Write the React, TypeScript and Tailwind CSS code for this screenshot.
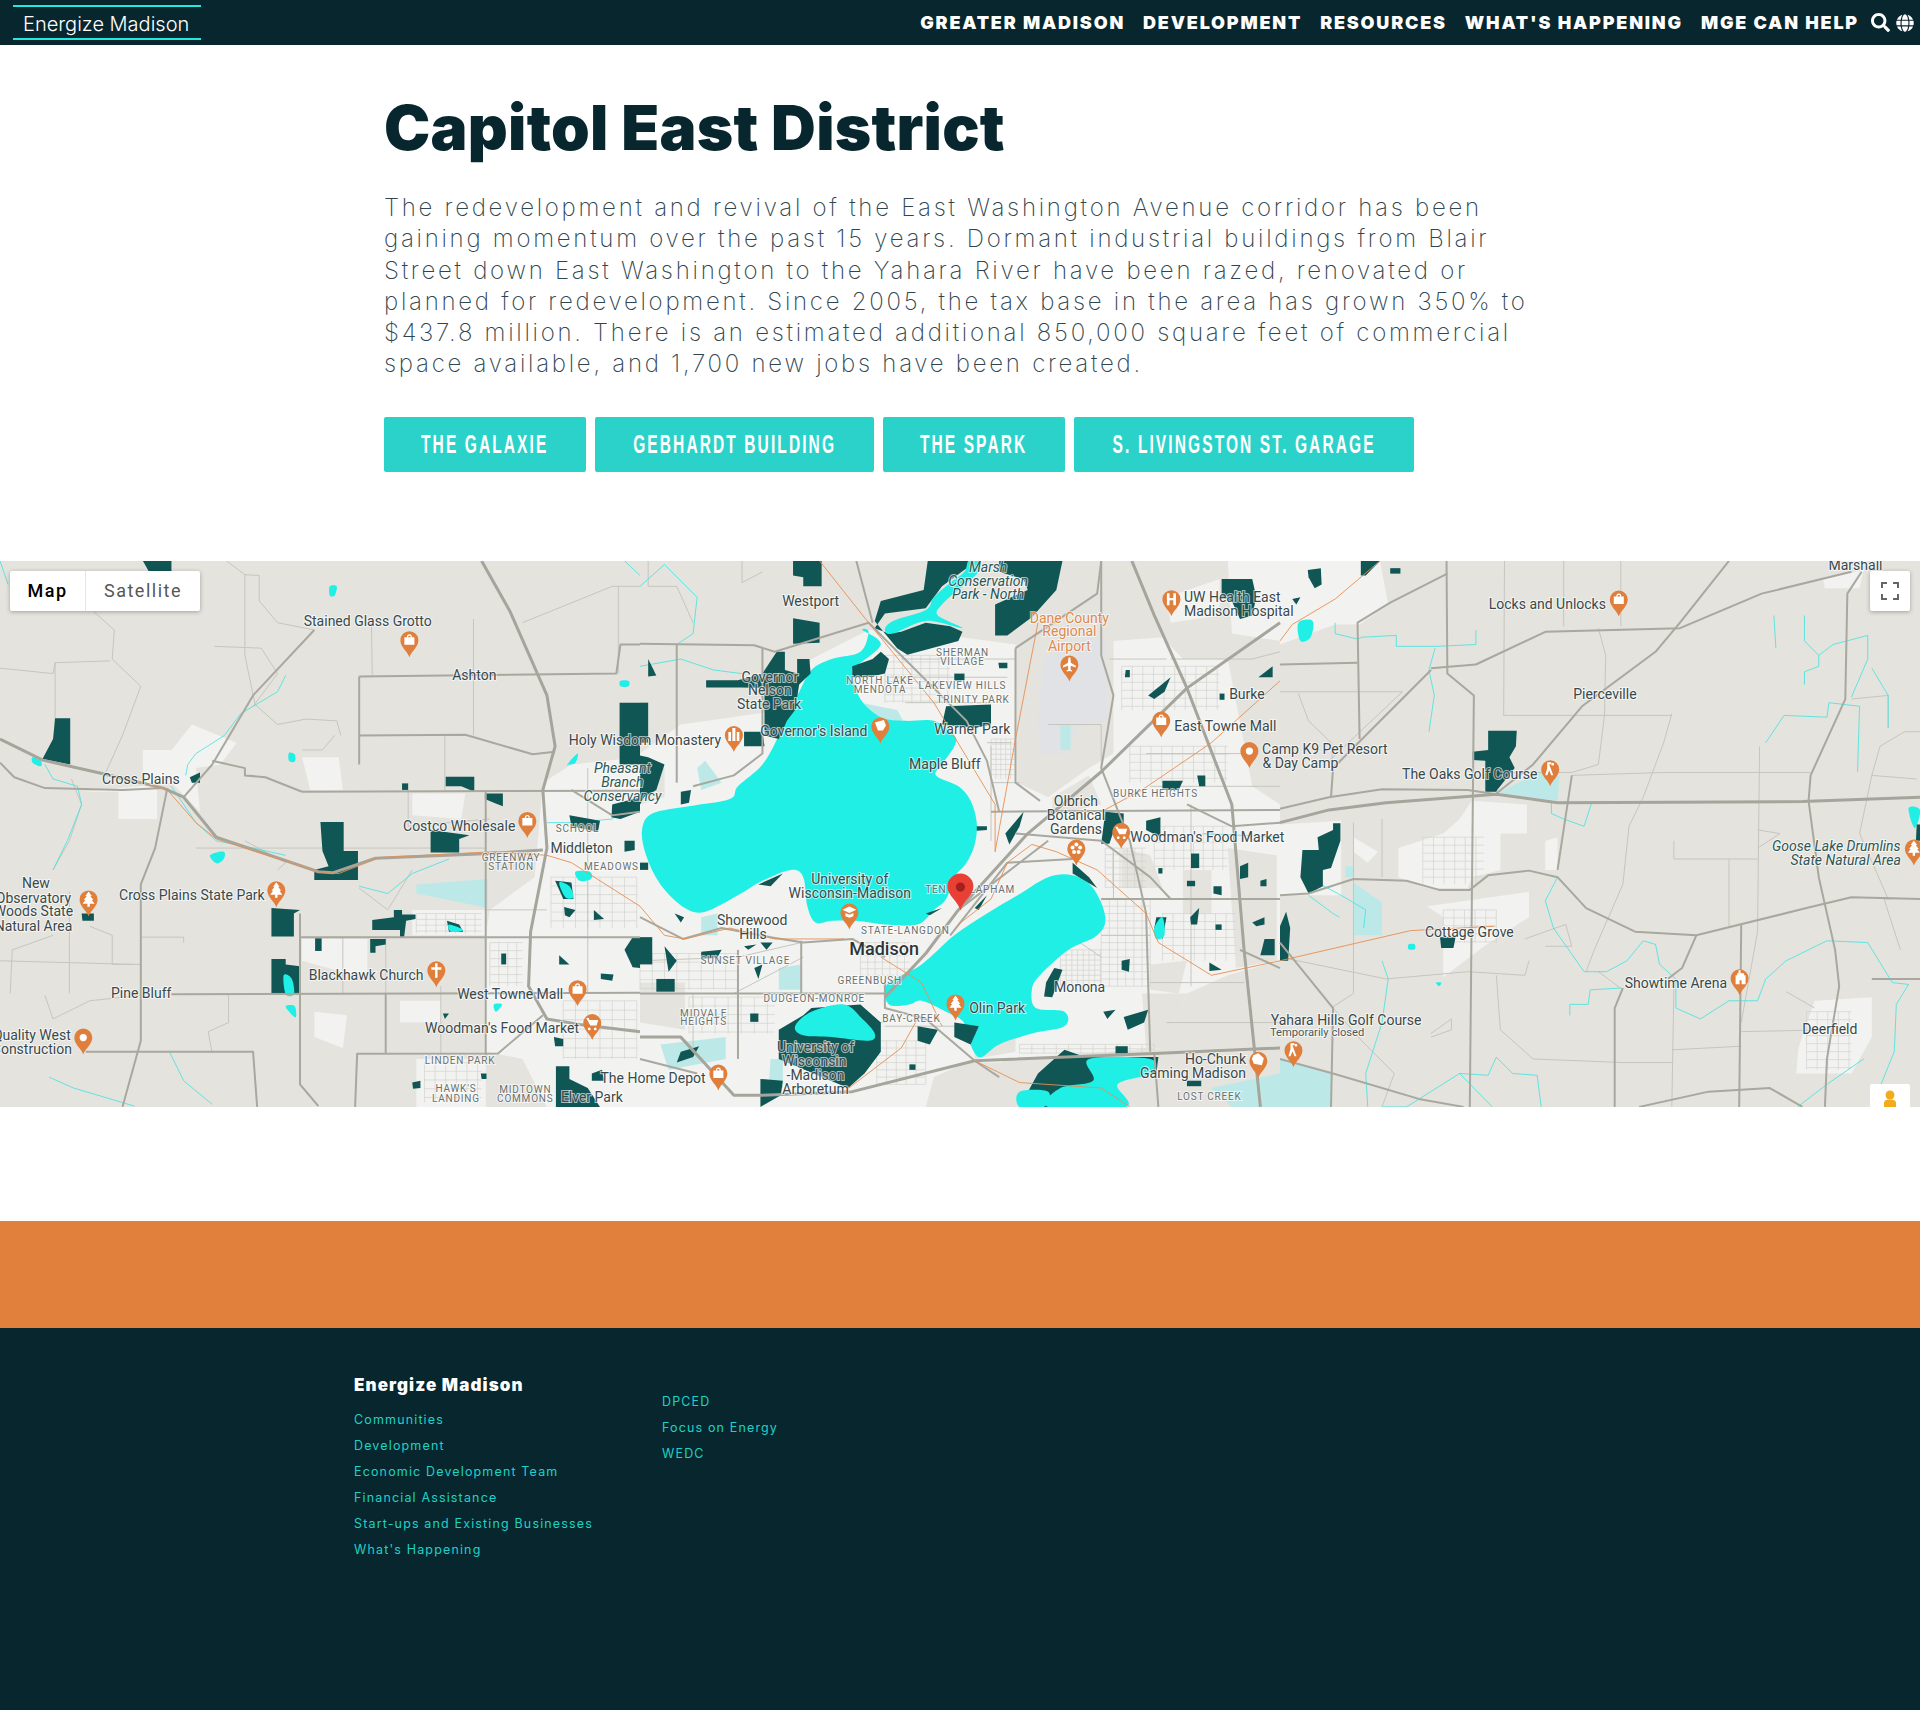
import { FaGlobe, FaSearch } from "react-icons/fa"

type Layer = [number, string[]]

const SX = 640 / 1568
const SY = 570 / 1568
const A = 0
const B = 640
const C = 1280

// thin street grid for the built-up parts of the map
function grid(x0: number, y0: number, x1: number, y1: number, dx: number, dy: number) {
  let d = ""
  for (let x = x0; x <= x1; x += dx) d += `M${x} ${y0}V${y1}`
  for (let y = y0; y <= y1; y += dy) d += `M${x0} ${y}H${x1}`
  return d
}

// closed catmull-rom curve through the points of a polygon, for shorelines
function smooth(poly: string) {
  const n = (poly.match(/-?\d+(\.\d+)?/g) ?? []).map(Number)
  const pts: [number, number][] = []
  for (let i = 0; i < n.length; i += 2) pts.push([n[i], n[i + 1]])
  let d = `M${pts[0][0]} ${pts[0][1]}`
  for (let i = 0; i < pts.length; i++) {
    const p0 = pts[(i - 1 + pts.length) % pts.length]
    const p1 = pts[i]
    const p2 = pts[(i + 1) % pts.length]
    const p3 = pts[(i + 2) % pts.length]
    d += `C${p1[0] + (p2[0] - p0[0]) / 6} ${p1[1] + (p2[1] - p0[1]) / 6} ${p2[0] - (p3[0] - p1[0]) / 6} ${p2[1] - (p3[1] - p1[1]) / 6} ${p2[0]} ${p2[1]}`
  }
  return d + "Z"
}

const urban: Layer[] = [
  [A, [
    "M1330 640 1400 590 1568 570 1568 1532 1340 1532 1280 1400 1190 1380 1190 1060 1200 990 1310 900z",
    "M205 665 290 665 290 740 385 740 385 660 350 640 350 550 420 550 470 480 580 530 540 590 480 600 490 720 420 640z",
    "M740 570 830 570 840 660 760 660z",
    "M1010 670 1140 670 1130 740 1010 730z",
    "M1010 990 1190 990 1190 1060 1010 1060z",
    "M740 1070 900 1070 900 1180 740 1130z",
    "M980 1240 1080 1240 1080 1300 980 1300z",
    "M770 1270 850 1280 840 1370 770 1340z",
    "M1020 1400 1190 1400 1190 1532 1020 1532z",
    "M1190 1070 1290 1070 1290 1300 1190 1300z",
  ]],
  [B, [
    "M0 560 100 480 290 450 360 440 420 300 560 220 720 230 920 260 925 640 1000 680 1100 600 1160 560 1160 250 1280 240 1330 300 1440 300 1500 650 1568 700 1568 1130 1440 1170 1340 1220 1280 1370 900 1400 720 1532 0 1532z",
    "M1290 130 1420 80 1420 180 1300 200z",
    "M1440 30 1568 30 1568 250 1450 230z",
  ]],
  [C, [
    "M0 30 245 30 265 150 195 205 135 205 0 260z",
    "M0 755 150 745 150 950 0 950z",
    "M470 690 605 700 605 780 540 780 540 880 470 900 460 930 360 930 290 900 290 820 400 780 440 740z",
    "M360 980 610 940 610 1010 500 1090 400 1175 400 1010z",
    "M180 790 240 830 215 860 180 830z",
    "M1310 1240 1450 1230 1450 1340 1400 1440 1265 1440 1270 1370z",
    "M650 800 680 790 680 880 650 880z",
    "M1330 80 1430 55 1420 105 1335 105z",
  ]],
]

const land: Layer[] = [
  [B, [
    "M0 1190 110 1190 110 1320 0 1300z",
    "M800 1410 920 1410 900 1532 700 1532 720 1450z",
    "M1230 1220 1340 1220 1280 1370 1240 1370z",
    "M120 270 300 270 300 420 160 420 120 380z",
    "M1180 820 1250 840 1280 930 1180 930z",
    "M1440 820 1560 840 1560 1130 1460 1150z",
    "M1330 880 1400 880 1400 1000 1330 1000z",
    "M1250 1140 1340 1130 1320 1220 1250 1210z",
    "M1010 680 1100 620 1130 700 1010 730z",
    "M0 610 60 600 60 680 0 700z",
    "M820 1300 920 1290 920 1380 820 1400z",
  ]],
]

const wetland: Layer[] = [
  [A, ["M1020 920 1195 905 1195 985 1020 945z"]],
  [B, [
    "M540 420 630 440 650 480 590 470 540 450z",
    "M150 1010 190 1000 190 1060 150 1060z",
    "M340 1150 395 1140 395 1210 340 1210z",
    "M50 1360 210 1340 210 1400 70 1430z",
    "M320 1400 350 1400 350 1480 315 1480z",
    "M1400 1480 1568 1440 1568 1532 1450 1532z",
    "M140 600 160 580 200 640 150 660z",
    "M1030 480 1055 480 1055 550 1030 550z",
  ]],
  [C, [
    "M0 1400 125 1440 125 1532 0 1532z",
    "M540 665 640 610 685 620 680 690 540 670z",
    "M180 915 250 970 250 1060 180 1060z",
    "M160 870 180 870 180 900 160 900z",
  ]],
]

const streets: Layer[] = [
  [A, [
    grid(1350, 900, 1560, 1040, 30, 24),
    grid(1200, 1080, 1280, 1200, 22, 22),
    grid(1020, 1000, 1180, 1055, 24, 16),
    grid(1040, 1410, 1180, 1520, 26, 24),
    grid(1380, 1240, 1560, 1400, 30, 26),
  ]],
  [B, [
    grid(860, 520, 918, 630, 12, 14),
    grid(1140, 820, 1240, 930, 18, 18),
    grid(1130, 960, 1250, 1200, 20, 20),
    grid(1260, 760, 1440, 880, 24, 22),
    grid(1280, 1000, 1460, 1130, 26, 22),
    grid(1030, 1100, 1130, 1200, 14, 14),
    grid(600, 290, 760, 420, 22, 18),
    grid(0, 1110, 240, 1210, 30, 24),
    grid(120, 1230, 330, 1330, 32, 24),
    grid(540, 1080, 660, 1170, 18, 18),
    grid(1180, 320, 1420, 440, 26, 22),
    grid(1200, 540, 1440, 640, 26, 22),
    grid(930, 1360, 1260, 1385, 30, 12),
    grid(580, 1350, 700, 1470, 24, 20),
  ]],
  [C, [
    grid(350, 790, 500, 920, 26, 22),
    grid(400, 990, 530, 1080, 26, 22),
    grid(1290, 1270, 1400, 1430, 26, 22),
  ]],
]

const minor: Layer[] = [
  [A, [
    "M555 30 600 68 635 70 635 140 680 200 770 220",
    "M230 170 280 220 275 300 345 375 300 510 260 610",
    "M0 325 130 340 135 310 270 305",
    "M135 310 135 520",
    "M600 68 600 290 625 425 680 480 750 465 825 470 835 510",
    "M525 265 640 270 680 340 620 430",
    "M1160 190 1160 510",
    "M910 190 912 345",
    "M1280 200 1500 100 1568 100",
    "M1515 100 1515 340",
    "M740 550 790 550 820 510",
    "M1090 510 1090 665",
    "M480 820 1190 820",
    "M345 1065 450 1065 450 1080",
    "M175 630 200 700 170 800 130 880",
    "M170 940 170 1220",
    "M0 1130 330 1140",
    "M25 1220 30 1100 130 1060",
    "M220 1035 275 1060 275 1140 345 1140",
    "M110 1225 130 1290 220 1240 345 1225",
    "M560 1225 560 1300 510 1325 520 1385",
    "M1080 1200 1080 1390",
    "M840 1065 840 1220",
    "M945 1065 945 1220",
    "M680 880 700 860 600 800",
    "M1000 660 1000 760 1200 740",
    "M880 930 950 990 1010 880",
    "M1440 600 1440 1220",
    "M1190 990 1340 990",
  ]],
  [B, [
    "M0 1130 240 1120 395 1080",
    "M130 1220 130 1400",
    "M230 1220 400 1120",
    "M850 530 910 530",
    "M860 640 930 640",
    "M860 540 860 800",
    "M1240 560 1500 560",
    "M1250 650 1568 650",
    "M1130 1060 1250 1060",
    "M1250 1190 1480 1190",
    "M1000 1020 1130 1120",
    "M1300 300 1500 300 1568 280",
    "M1150 300 1290 300",
    "M1350 700 1350 1200",
    "M1160 830 1160 960",
    "M650 420 860 420",
    "M640 300 920 300",
    "M610 350 900 350",
    "M250 30 250 90 300 60",
    "M20 30 20 100 90 100 130 200",
    "M1000 480 1130 480 1130 600",
    "M1290 1300 1568 1300",
    "M600 1310 770 1310",
    "M440 1300 600 1300",
  ]],
  [C, [
    "M550 30 548 455 960 455",
    "M835 30 835 210",
    "M695 30 695 210",
    "M780 215 798 290 795 455 780 590 715 612 540 612",
    "M960 450 940 530 890 680 855 760 840 920 770 1100 750 1160",
    "M1175 540 1170 1050 1130 1300",
    "M0 390 300 390 120 580",
    "M45 395 70 470 125 530 130 600",
    "M965 800 965 850 1170 850",
    "M1100 850 1100 1040",
    "M715 620 940 612 1300 612",
    "M1170 770 1225 780 1170 820",
    "M530 1170 540 1320 620 1400 840 1410 960 1410",
    "M965 1200 960 1532",
    "M960 1375 1130 1365",
    "M1130 1325 1340 1320",
    "M1240 1215 1310 1260",
    "M1400 410 1490 400 1490 490",
    "M1450 620 1420 780 1490 960",
    "M180 750 180 1220 125 1260",
    "M250 740 250 900",
    "M130 1260 200 1350 280 1440 250 1532",
    "M0 1120 260 1180 460 1160 600 1170 610 1130",
    "M600 1070 700 1030 715 1090 650 1090",
    "M780 1160 840 1210",
    "M370 1330 420 1290 420 1320 370 1340",
    "M1500 960 1480 960 1520 1100",
    "M1560 630 1450 620 1470 540 1530 500 1568 500",
  ]],
]

const streams: Layer[] = [
  [A, [
    "M700 345 680 390 590 450 550 510 480 560 460 590 455 620",
    "M110 590 130 630 190 650 200 700 165 800 130 880",
    "M0 30 20 95",
    "M420 650 480 750 530 800 620 820 700 840",
    "M880 925 950 945 1010 890 1100 850",
    "M415 1380 450 1460 520 1525",
    "M120 1450 180 1480 330 1530",
    "M1530 30 1568 70",
    "M1568 680 1500 740 1400 750 1340 750",
  ]],
  [B, [
    "M0 100 60 40 140 130 130 230 90 260",
    "M0 320 100 300 180 330 250 340",
    "M1380 780 1568 790",
  ]],
  [C, [
    "M135 200 135 230 190 245 200 240 285 235 285 265 385 265 480 260 480 220",
    "M380 270 365 330 378 400 365 500",
    "M765 690 745 760 695 740 665 725 665 690",
    "M680 900 650 965 670 1040 745 1160 800 1160 850 1130 890 1075 920 1085 930 1140 970 1180 970 1260 1030 1290 1100 1240 1170 1240 1190 1180 1240 1130 1340 1075 1440 1080 1500 1190 1540 1195 1510 1250 1505 1380 1450 1532",
    "M1285 180 1285 250 1320 290 1320 320 1285 335 1285 370",
    "M1210 180 1215 270",
    "M1320 290 1355 260 1440 235 1440 300 1400 405",
    "M1190 530 1235 455 1340 460 1345 420 1420 430 1415 610",
    "M100 920 150 950 210 990 205 1040",
    "M250 1130 265 1180 250 1300 210 1440 215 1532",
    "M710 1280 710 1250 755 1250 760 1210 835 1205",
    "M250 1532 310 1532 440 1440 510 1445 530 1395 570 1440 630 1445 640 1532",
    "M440 1440 520 1532",
    "M1430 1400 1340 1470 1268 1532",
    "M70 950 130 1000 145 1010",
    "M1450 325 1490 400 1490 490",
  ]],
]

const lakes: Layer[] = [
  [A, [
    "M80 570 100 580 100 595 80 585z",
    "M708 558 722 562 722 582 708 580z",
    "M515 840 548 830 548 850 530 862z",
    "M808 100 825 100 820 125 808 125z",
    "M1410 885 1445 885 1448 905 1420 910z",
    "M1390 590 1415 560 1410 585 1395 590z",
    "M1520 360 1540 360 1540 375 1520 375z",
    "M1210 1250 1230 1250 1215 1270z",
  ]],
  [B, [
    "M5 770 30 725 120 705 220 685 240 650 300 590 340 510 360 450 390 390 420 330 470 300 540 280 560 225 545 220 590 260 530 320 520 340 540 410 590 460 650 470 720 470 770 510 770 540 740 590 725 620 780 650 810 690 825 750 820 810 800 860 770 900 750 960 720 990 680 1030 600 1030 530 1020 470 1020 430 1025 410 980 400 900 370 880 300 910 240 950 160 995 110 985 50 920 15 840z",
    "M925 950 1000 900 1060 895 1110 930 1140 1010 1120 1060 1050 1100 980 1170 960 1210 970 1260 1040 1270 1040 1310 960 1330 880 1360 830 1395 800 1330 790 1295 750 1270 690 1240 660 1250 610 1250 605 1195 690 1140 770 1060 850 1000z",
  ]],
  [C, [
    "M45 200 80 195 75 240 50 250z",
    "M1540 710 1568 715 1555 765z",
    "M315 1085 330 1085 330 1098 315 1098z",
    "M382 1190 395 1190 390 1200z",
  ]],
]

const parks: Layer[] = [
  [A, [
    "M1518 420 1568 420 1568 590 1518 590z",
    "M135 463 172 463 172 590 104 575 130 520z",
    "M1092 624 1162 624 1162 665 1130 650 1092 650z",
    "M1188 670 1232 670 1232 705 1210 695 1188 685z",
    "M985 642 1000 642 1000 660 985 660z",
    "M465 625 490 612 490 640 470 640z",
    "M785 748 842 748 842 828 877 828 877 908 770 908 770 880 805 870 790 828z",
    "M1055 770 1150 785 1125 795 1125 832 1055 832z",
    "M912 1018 965 1010 965 990 985 990 985 1003 1018 1003 1018 1015 995 1020 990 1065 980 1065 980 1045 912 1045z",
    "M665 985 735 990 720 1000 720 1063 665 1063z",
    "M772 1068 788 1068 788 1103 772 1103z",
    "M907 1070 945 1070 945 1085 920 1090 920 1108 907 1108z",
    "M665 1125 700 1125 700 1140 735 1145 735 1222 665 1222z",
    "M1095 1020 1125 1030 1135 1050 1100 1050z",
    "M1382 982 1410 990 1395 1010 1384 1005z",
    "M1455 990 1480 1015 1455 1018z",
    "M1360 910 1400 915 1405 960 1380 960z",
    "M1370 1115 1395 1140 1370 1140z",
    "M1472 1165 1503 1168 1500 1185 1472 1180z",
    "M1530 1100 1550 1065 1568 1065 1568 1150 1550 1148z",
    "M1228 1110 1240 1110 1240 1140 1228 1140z",
    "M1362 1420 1395 1420 1395 1455 1440 1480 1470 1532 1362 1532z",
    "M1450 1440 1475 1430 1480 1460 1450 1460z",
    "M1357 1340 1380 1345 1380 1365 1360 1365z",
    "M1010 1465 1030 1460 1030 1480 1012 1482z",
    "M1178 1440 1192 1440 1192 1455 1180 1455z",
    "M1500 700 1568 680 1568 720 1520 740 1498 735z",
    "M1395 730 1470 745 1465 775 1400 760z",
    "M350 30 420 30 420 60 365 60z",
    "M200 1000 230 1000 230 1020 202 1020z",
    "M1530 800 1555 800 1555 825 1530 830z",
    "M1085 1275 1100 1275 1090 1290z",
  ]],
  [B, [
    "M375 30 445 30 445 100 400 100 400 75 375 70z",
    "M375 188 440 200 440 255 375 258z",
    "M705 30 805 30 800 50 740 100 700 160 600 175 575 215 610 230 640 225 700 200 760 210 790 225 780 250 655 288 630 270 600 230 575 195 590 140 695 110z",
    "M880 30 1035 30 1020 110 960 185 900 235 870 235 870 150 950 110 940 80 880 60z",
    "M335 280 355 280 355 330 385 340 385 300 415 300 418 340 390 370 380 440 360 470 340 520 305 510 305 380 250 378 162 378 162 358 240 358 300 340z",
    "M0 420 20 420 20 530 0 530z",
    "M255 500 300 500 305 540 255 540z",
    "M0 565 20 570 60 590 40 660 10 680 0 700z",
    "M520 320 570 300 590 280 610 300 600 340 560 350 520 350z",
    "M750 430 860 425 860 480 820 490 740 480z",
    "M770 340 795 340 795 360 770 360z",
    "M878 310 900 310 900 325 880 325z",
    "M100 665 125 660 120 695 100 700z",
    "M20 300 40 345 20 348z",
    "M1425 80 1500 80 1510 130 1500 180 1470 190 1450 140 1425 130z",
    "M1245 400 1300 350 1285 390 1260 410z",
    "M1190 330 1200 330 1200 350 1188 350z",
    "M1420 395 1432 395 1432 412 1420 412z",
    "M1515 350 1550 320 1550 350z",
    "M1280 635 1330 635 1320 660 1280 660z",
    "M1365 620 1385 620 1385 650 1370 650z",
    "M895 780 940 720 930 760 905 810z",
    "M825 760 850 760 850 770 825 772z",
    "M1140 720 1185 725 1185 760 1160 775 1150 808 1130 808z",
    "M1240 745 1275 735 1275 790 1240 770z",
    "M1350 835 1370 835 1370 875 1350 875z",
    "M1470 870 1490 860 1490 900 1470 905z",
    "M1270 875 1280 875 1280 890 1270 890z",
    "M1340 910 1360 910 1360 925 1340 925z",
    "M1405 925 1425 925 1425 950 1405 945z",
    "M1520 910 1535 905 1535 925 1520 925z",
    "M1348 1010 1370 985 1365 1030 1350 1030z",
    "M1265 1010 1290 1010 1280 1070 1260 1040z",
    "M1500 1025 1530 1010 1530 1030 1510 1035z",
    "M1410 1030 1425 1030 1425 1045 1410 1045z",
    "M1530 1070 1555 1070 1555 1115 1520 1115z",
    "M1395 1135 1425 1155 1395 1158z",
    "M1180 1130 1200 1125 1198 1160 1180 1155z",
    "M995 1190 1015 1150 1035 1155 1010 1230 990 1228z",
    "M1135 1270 1165 1265 1145 1290z",
    "M1185 1285 1245 1265 1235 1300 1195 1320z",
    "M930 1532 975 1440 1040 1375 1090 1395 1270 1395 1265 1440 1170 1430 1120 1470 1110 1532z",
    "M1340 1460 1375 1460 1375 1475 1340 1475z",
    "M1165 1365 1195 1365 1195 1385 1165 1385z",
    "M340 1320 400 1280 420 1260 540 1250 590 1300 590 1380 550 1440 510 1480 340 1400z",
    "M295 1455 350 1460 345 1500 295 1532z",
    "M40 1180 85 1180 85 1215 40 1215z",
    "M270 1275 290 1275 290 1298 270 1298z",
    "M770 1300 830 1310 810 1360 770 1340z",
    "M680 1310 730 1320 710 1360 680 1350z",
    "M0 1065 30 1065 30 1140 0 1140z",
    "M60 1090 90 1130 70 1160z",
    "M150 1105 200 1100 190 1120 150 1125z",
    "M85 1000 108 1010 100 1025z",
    "M280 1150 300 1140 290 1180z",
    "M295 1080 325 1080 310 1100z",
    "M255 1090 285 1085 265 1100z",
    "M290 920 350 890 320 925z",
    "M100 1380 145 1365 130 1395 90 1410z",
    "M700 1000 740 985 710 1005z",
    "M820 985 850 950 830 990z",
    "M660 1415 675 1415 675 1430 660 1430z",
    "M1060 860 1100 900 1120 930 1060 890z",
    "M0 860 20 860 20 880 0 880z",
  ]],
  [C, [
    "M472 555 510 550 510 497 580 497 578 540 562 570 575 600 532 660 530 665 503 665 503 580 472 578z",
    "M55 825 95 825 92 790 130 770 130 752 148 752 148 800 125 875 105 880 105 925 70 945 50 900z",
    "M0 1035 15 995 25 1040 20 1130 0 1130z",
    "M392 1065 430 1065 425 1095 395 1095z",
    "M68 55 100 50 102 95 85 105 70 75z",
    "M198 30 245 30 210 70 198 70z",
    "M270 50 295 50 295 65 270 65z",
    "M30 135 50 130 40 150z",
    "M1560 755 1568 755 1568 800 1558 800z",
  ]],
]

const waterOverParks: Layer[] = [
  [A, [
    "M1370 915 1395 925 1405 955 1385 955z",
    "M695 1170 715 1180 720 1222 700 1222z",
    "M700 1255 722 1255 725 1285 712 1275z",
    "M1100 1030 1135 1045 1105 1050z",
  ]],
  [B, [
    "M805 30 795 60 760 90 720 130 700 165 620 195 600 220 620 230 700 195 790 215 730 180 740 150 790 100 830 60 830 30z",
    "M1100 1400 1250 1400 1250 1440 1170 1470 1190 1532 1000 1532 1030 1480 1110 1460z",
    "M930 1490 1000 1490 990 1532 930 1532z",
    "M380 1310 420 1270 500 1250 545 1290 575 1330 560 1350 470 1340 400 1335z",
    "M1260 1040 1280 1010 1285 1060 1265 1070z",
  ]],
]

const roads: Layer[] = [
  [A, [
    "M0 585 35 625 110 655 300 660 400 655",
    "M770 220 620 400 520 590 450 680",
    "M880 348 1510 340 1520 260 1568 260",
    "M880 510 1140 508 1305 562 1360 555",
    "M740 665 1568 662",
    "M735 1065 1568 1065",
    "M420 1222 1568 1218",
    "M410 655 380 820 345 920 345 1350 300 1532",
    "M210 1380 620 1380 630 1532",
    "M735 1000 735 1470 780 1530",
    "M1190 660 1190 1390",
    "M870 1532 875 1386 1220 1385 1330 1280",
    "M520 580 600 600 600 620 650 625 740 665",
    "M880 348 880 590",
    "M945 1220 945 1385",
    "M1400 660 1500 730 1568 720",
  ]],
  [B, [
    "M0 258 280 262 330 280 560 200 640 290 800 470 850 580 880 720",
    "M530 30 570 200",
    "M1130 30 1130 290 1160 400 1130 600 1200 800 1240 1000 1250 1380",
    "M860 720 1568 715",
    "M1130 960 1568 960",
    "M0 1010 105 1070 200 1040 320 1065 400 1080 520 1070 600 1120",
    "M600 1180 600 1260 700 1290 820 1405 880 1450",
    "M920 270 1120 120 1130 30",
    "M920 270 920 640 980 690",
    "M90 260 90 640",
    "M300 270 300 560 230 620 130 650",
    "M0 1220 600 1220",
    "M920 780 1130 800 1250 900 1300 960",
    "M1340 700 1450 760 1568 750",
    "M240 1100 240 1400",
    "M395 1075 395 1220",
    "M1260 1385 1270 1532",
    "M0 1400 140 1440",
    "M1568 1150 1470 1100",
    "M780 990 1000 800",
    "M760 1060 900 860 1060 850",
  ]],
  [C, [
    "M0 712 120 680 250 658 460 660 530 672",
    "M0 950 70 945 180 905 310 910 390 935 465 935 510 895 610 882 680 900 750 985 870 1050 1020 1060 1290 985 1400 955 1568 960",
    "M0 315 190 310",
    "M195 520 190 200 270 145 410 65",
    "M480 315 650 225 980 215 1180 120 1400 60",
    "M370 325 480 315",
    "M125 680 130 600 370 330",
    "M408 30 410 340 475 400 465 1532",
    "M1100 30 980 200 920 280 740 430 620 590 530 670",
    "M1425 60 1390 120 1385 410 1300 620 1295 690 1320 900 1360 1100 1370 1200 1340 1400 1335 1532",
    "M715 620 680 880",
    "M0 1080 130 1260 125 1532",
    "M0 1400 130 1440 340 1510 450 1532",
    "M1020 1060 985 1150 950 1180",
    "M840 1205 820 1260 820 1532",
    "M1130 1030 1125 1532",
    "M880 1532 1050 1490 1200 1480 1280 1532",
    "M1568 1180 1450 1180",
  ]],
]

const highways: Layer[] = [
  [A, [
    "M0 520 105 578 250 615 400 655 450 680 530 790 780 885 815 888 920 848 1200 835 1330 825",
    "M1180 30 1250 170 1340 400 1360 540 1330 660 1340 820 1300 1050 1295 1200 1340 1290 1420 1305 1568 1325",
  ]],
  [B, [
    "M1205 30 1260 180 1340 380 1450 700 1480 1100 1520 1532",
    "M1568 200 1340 380 1130 610 950 780 780 990 700 1110 600 1230",
    "M0 1340 100 1340 230 1500 300 1500 520 1490 820 1405 1260 1385 1568 1370",
  ]],
  [C, ["M0 750 120 715 260 695 530 672 680 695 1280 692 1568 680"]],
]

const rail: Layer[] = [
  [A, ["M355 640 410 660 480 750 530 795 780 885 830 890 930 846 1210 830 1340 840 1400 860 1568 980"]],
  [B, [
    "M0 980 60 1060 110 1070 220 1040 330 1070 500 1070",
    "M440 30 560 200 720 420 870 700 870 830",
    "M975 200 920 520 870 830",
    "M1568 360 1400 530 1230 660 1130 720",
    "M780 1030 860 960 900 860 960 810 1020 830 1120 880 1240 1000 1270 1080 1400 1170 1568 1130",
    "M590 1120 690 1190 740 1310",
    "M500 1490 640 1370 680 1290",
    "M820 1405 930 1465 1130 1480 1200 1532",
  ]],
  [C, ["M0 250 30 205 135 135 245 30", "M0 1130 320 1047 525 1035"]],
]

type Kind = "place" | "park" | "hood" | "air" | "city" | "note"

// x, y are in the same panel units as the shapes
const labels: [number, number, number, string, Kind?][] = [
  [A, 901, 196, "Stained Glass Grotto"],
  [A, 1162, 345, "Ashton"],
  [A, 345, 631, "Cross Plains"],
  [A, 1125, 760, "Costco Wholesale"],
  [A, 1415, 765, "SCHOOL", "hood"],
  [A, 1425, 821, "Middleton"],
  [A, 1252, 845, "GREENWAY", "hood"],
  [A, 1252, 870, "STATION", "hood"],
  [A, 1498, 872, "MEADOWS", "hood"],
  [A, 88, 917, "New"],
  [A, 82, 956, "Observatory"],
  [A, 82, 994, "Woods State"],
  [A, 82, 1033, "Natural Area"],
  [A, 470, 950, "Cross Plains State Park"],
  [A, 897, 1170, "Blackhawk Church"],
  [A, 346, 1218, "Pine Bluff"],
  [A, 1250, 1221, "West Towne Mall"],
  [A, 1230, 1315, "Woodman's Food Market"],
  [A, 78, 1335, "Quality West"],
  [A, 78, 1373, "Construction"],
  [A, 1127, 1403, "LINDEN PARK", "hood"],
  [A, 1117, 1482, "HAWK'S", "hood"],
  [A, 1117, 1508, "LANDING", "hood"],
  [A, 1287, 1485, "MIDTOWN", "hood"],
  [A, 1287, 1510, "COMMONS", "hood"],
  [A, 1450, 1505, "Elver Park"],
  [A, 1580, 523, "Holy Wisdom Monastery"],
  [A, 1525, 600, "Pheasant", "park"],
  [A, 1525, 638, "Branch", "park"],
  [A, 1525, 678, "Conservancy", "park"],
  [A, 1600, 1453, "The Home Depot"],
  [B, 853, 46, "Marsh", "park"],
  [B, 853, 84, "Conservation", "park"],
  [B, 853, 122, "Park - North", "park"],
  [B, 418, 141, "Westport"],
  [B, 1052, 186, "Dane County", "air"],
  [B, 1052, 224, "Regional", "air"],
  [B, 1052, 263, "Airport", "air"],
  [B, 1451, 128, "UW Health East"],
  [B, 1467, 168, "Madison Hospital"],
  [B, 790, 281, "SHERMAN", "hood"],
  [B, 790, 306, "VILLAGE", "hood"],
  [B, 318, 348, "Governor"],
  [B, 318, 386, "Nelson"],
  [B, 316, 424, "State Park"],
  [B, 588, 360, "NORTH LAKE", "hood"],
  [B, 588, 385, "MENDOTA", "hood"],
  [B, 790, 374, "LAKEVIEW HILLS", "hood"],
  [B, 816, 410, "TRINITY PARK", "hood"],
  [B, 1487, 397, "Burke"],
  [B, 426, 498, "Governor's Island"],
  [B, 814, 493, "Warner Park"],
  [B, 1434, 483, "East Towne Mall"],
  [B, 747, 589, "Maple Bluff"],
  [B, 1263, 671, "BURKE HEIGHTS", "hood"],
  [B, 1068, 691, "Olbrich"],
  [B, 1068, 730, "Botanical"],
  [B, 1068, 768, "Gardens"],
  [B, 1390, 790, "Woodman's Food Market"],
  [B, 514, 905, "University of"],
  [B, 514, 944, "Wisconsin-Madison"],
  [B, 725, 933, "TEN", "hood"],
  [B, 863, 933, "LAPHAM", "hood"],
  [B, 275, 1018, "Shorewood"],
  [B, 277, 1057, "Hills"],
  [B, 650, 1046, "STATE-LANGDON", "hood"],
  [B, 598, 1096, "Madison", "city"],
  [B, 258, 1128, "SUNSET VILLAGE", "hood"],
  [B, 563, 1183, "GREENBUSH", "hood"],
  [B, 1077, 1203, "Monona"],
  [B, 427, 1235, "DUDGEON-MONROE", "hood"],
  [B, 875, 1261, "Olin Park"],
  [B, 156, 1274, "MIDVALE", "hood"],
  [B, 156, 1298, "HEIGHTS", "hood"],
  [B, 665, 1290, "BAY-CREEK", "hood"],
  [B, 430, 1367, "University of"],
  [B, 427, 1406, "Wisconsin"],
  [B, 430, 1444, "-Madison"],
  [B, 430, 1483, "Arboretum"],
  [B, 1410, 1401, "Ho-Chunk"],
  [B, 1355, 1440, "Gaming Madison"],
  [B, 1395, 1502, "LOST CREEK", "hood"],
  [B, 1678, 548, "Camp K9 Pet Resort"],
  [B, 1618, 587, "& Day Camp"],
  [B, 1730, 1293, "Yahara Hills Golf Course"],
  [B, 1659, 1326, "Temporarily closed", "note"],
  [C, 1410, 40, "Marshall"],
  [C, 655, 149, "Locks and Unlocks"],
  [C, 796, 397, "Pierceville"],
  [C, 465, 617, "The Oaks Golf Course"],
  [C, 1363, 815, "Goose Lake Drumlins", "park"],
  [C, 1386, 853, "State Natural Area", "park"],
  [C, 464, 1052, "Cottage Grove"],
  [C, 970, 1192, "Showtime Arena"],
  [C, 1347, 1318, "Deerfield"],
]

type Glyph = "bag" | "tree" | "cross" | "cart" | "dot" | "temple" | "boat" | "plane" | "h" | "flower" | "grad" | "casino" | "golf" | "arena"

const pins: [number, number, number, Glyph][] = [
  [A, 1003, 295, "bag"],
  [A, 1292, 792, "bag"],
  [A, 217, 1008, "tree"],
  [A, 677, 983, "tree"],
  [A, 1069, 1203, "cross"],
  [A, 1415, 1255, "bag"],
  [A, 1451, 1348, "cart"],
  [A, 204, 1388, "dot"],
  [B, 230, 556, "temple"],
  [B, 589, 532, "boat"],
  [B, 1052, 362, "plane"],
  [B, 1302, 182, "h"],
  [B, 1277, 516, "bag"],
  [B, 1493, 600, "dot"],
  [B, 1179, 822, "cart"],
  [B, 1069, 868, "flower"],
  [B, 513, 1044, "grad"],
  [B, 192, 1487, "bag"],
  [B, 773, 1294, "tree"],
  [B, 1515, 1452, "casino"],
  [C, 830, 183, "bag"],
  [C, 662, 650, "golf"],
  [C, 1553, 868, "tree"],
  [C, 1126, 1225, "arena"],
  [C, 33, 1423, "golf"],
]

function PinGlyph({ glyph }: { glyph: Glyph }) {
  switch (glyph) {
    case "bag":
      return <path d="M-5 -20h10v7.500h-10z M-2.500 -20a2.500 3 0 0 1 5 0h-1.200a1.300 1.800 0 0 0 -2.600 0z" fill="#fff" />
    case "tree":
      return <path d="M0 -25l3.200 4.500h-1.400l3 4h-1.600l2.800 3.800h-4.800v3h-2.400v-3h-4.800l2.800-3.800h-1.600l3-4h-1.400z" fill="#fff" />
    case "cross":
      return <path d="M-1.200 -24h2.400v4h3.800v2.400h-3.800v8h-2.400v-8h-3.800v-2.400h3.800z" fill="#fff" />
    case "cart":
      return <path d="M-6 -22h2.500l.8 2h8.700l-1.700 5.500h-6.200zM-3 -12.500a1.400 1.400 0 1 0 .01 0zM3 -12.500a1.400 1.400 0 1 0 .01 0z" fill="#fff" />
    case "dot":
      return <circle cx="0" cy="-17" r="3.600" fill="#fff" />
    case "temple":
      return <path d="M-1.500 -24h3v13h-3zM-5.500 -20h2.600v9h-2.600zM2.900 -20h2.600v9h-2.600z" fill="#fff" />
    case "boat":
      return <path d="M-5.500 -21l9 -2.500 2 5.500 -3 5h-5z" fill="#fff" />
    case "plane":
      return <path d="M-1 -24h2l.4 5.200 5 3v1.600l-5-1.600-.3 3.600 1.600 1.200v1l-2.700-.7-2.700.7v-1l1.600-1.200-.3-3.600-5 1.600v-1.600l5-3z" fill="#fff" />
    case "h":
      return <path d="M-4.500 -23h2.600v4.800h3.800v-4.800h2.600v12h-2.600v-4.800h-3.800v4.800h-2.600z" fill="#fff" />
    case "flower":
      return (
        <g fill="#fff">
          <circle cx="0" cy="-21" r="2" />
          <circle cx="-3.800" cy="-18" r="2" />
          <circle cx="3.800" cy="-18" r="2" />
          <circle cx="-2.300" cy="-13.500" r="2" />
          <circle cx="2.300" cy="-13.500" r="2" />
        </g>
      )
    case "grad":
      return <path d="M0 -23l7 3.200-7 3.200-7-3.200zM-4 -16.500l4 1.800 4-1.800v3.200l-4 1.500-4-1.500z" fill="#fff" />
    case "casino":
      return <path d="M-5 -22.500l5 -2 5.500 5 -2 7-8 -1.500 -2 -5z" fill="#fff" />
    case "golf":
      return <path d="M-3 -24h4v2h-2l4 11h-2l-2-5-2 5h-2l2-7z M2.500 -23.500a1.400 1.400 0 1 0 .01 0z" fill="#fff" />
    case "arena":
      return <path d="M-1 -25h2v3h3.500v2h1.500v9h-4v-4h-2v4h-4v-9h1.500v-2h1.500z" fill="#fff" />
  }
}

function Shapes({ layers, fill, stroke, width, round }: { layers: Layer[]; fill?: string; stroke?: string; width?: number; round?: boolean }) {
  return (
    <>
      {layers.map(([off, paths]) => (
        <g key={off} transform={`translate(${off} 550) scale(${SX} ${SY})`}>
          {paths.map((d, i) => (
            <path
              key={i}
              d={round ? smooth(d) : d}
              fill={fill ?? "none"}
              stroke={stroke}
              strokeWidth={width}
              strokeLinejoin="round"
              vectorEffect="non-scaling-stroke"
            />
          ))}
        </g>
      ))}
    </>
  )
}

const labelStyle: Record<Kind, { size: number; fill: string; italic?: boolean; spacing?: number; weight?: number }> = {
  place: { size: 14, fill: "#39494b" },
  park: { size: 14, fill: "#2d5655", italic: true },
  hood: { size: 10, fill: "#69716f", spacing: 0.8 },
  air: { size: 14, fill: "#dd8a4e" },
  city: { size: 18, fill: "#2c3638", weight: 500 },
  note: { size: 11.2, fill: "#4c5a5b" },
}

function MapCanvas() {
  return (
    <svg viewBox="0 561 1920 546" className="block h-[546px] w-[1920px]" aria-label="Map of Madison">
      <rect x="0" y="561" width="1920" height="546" fill="#e4e3de" />
      <Shapes layers={urban} fill="#f2f2f1" />
      <Shapes layers={land} fill="#e4e3de" />
      <Shapes layers={[[B, ["M990 300 1100 240 1140 240 1145 470 1080 480 1040 560 980 560 975 470z"]]]} fill="#e1e2e6" />
      <Shapes layers={wetland} fill="#bce9e7" />
      <Shapes layers={streets} stroke="#d3d3cd" width={0.7} />
      <Shapes layers={minor} stroke="#c6c6bf" width={1} />
      <Shapes layers={streams} stroke="#3fe3df" width={0.8} />
      <Shapes layers={lakes} fill="#20efe6" round />
      <Shapes layers={parks} fill="#0f5654" />
      <Shapes layers={waterOverParks} fill="#20efe6" round />
      <Shapes layers={roads} stroke="#a8a89f" width={2} />
      <Shapes layers={highways} stroke="#a5a59c" width={3} />
      <Shapes layers={rail} stroke="#e88f52" width={0.9} />
      {labels.map(([off, x, y, text, kind], i) => {
        const s = labelStyle[kind ?? "place"]
        return (
          <text
            key={i}
            x={off + x * SX}
            y={550 + y * SY}
            textAnchor="middle"
            dominantBaseline="central"
            fontFamily="Roboto, sans-serif"
            fontSize={s.size}
            fontStyle={s.italic ? "italic" : "normal"}
            fontWeight={s.weight ?? 400}
            letterSpacing={s.spacing ?? 0}
            fill={s.fill}
            stroke="#ffffff"
            strokeOpacity={0.65}
            strokeWidth={2}
            paintOrder="stroke"
          >
            {text}
          </text>
        )
      })}
      {pins.map(([off, x, y, glyph], i) => (
        <g key={i} transform={`translate(${off + x * SX} ${550 + y * SY})`}>
          <path d="M0 0C-2 -6 -9 -10 -9 -17A9 9 0 1 1 9 -17C9 -10 2 -6 0 0Z" fill="#e07f3c" />
          <PinGlyph glyph={glyph} />
        </g>
      ))}
      <g transform={`translate(${B + 785 * SX} ${550 + 992 * SY})`}>
        <path d="M0 0C-2 -9 -13 -15 -13 -24A13 13 0 1 1 13 -24C13 -15 2 -9 0 0Z" fill="#ea3f35" />
        <circle cx="0" cy="-23.500" r="4.600" fill="#a3211c" />
      </g>
    </svg>
  )
}

const navItems = ["GREATER MADISON", "DEVELOPMENT", "RESOURCES", "WHAT'S HAPPENING", "MGE CAN HELP"]
const buttons = [
  { label: "THE GALAXIE", width: "w-[202px]" },
  { label: "GEBHARDT BUILDING", width: "w-[279px]" },
  { label: "THE SPARK", width: "w-[182px]" },
  { label: "S. LIVINGSTON ST. GARAGE", width: "w-[340px]" },
]
const footerLinks = [
  "Communities",
  "Development",
  "Economic Development Team",
  "Financial Assistance",
  "Start-ups and Existing Businesses",
  "What's Happening",
]
const partnerLinks = ["DPCED", "Focus on Energy", "WEDC"]

export default function App() {
  return (
    <div className="flex h-[1710px] w-[1920px] flex-col bg-white font-['Inter',sans-serif]">
      <header className="flex h-[45px] items-center justify-between bg-[#07262e] pl-[13px] pr-[6px]">
        <div className="flex h-[35px] w-[188px] items-center border-y-2 border-[#22e8df] pt-[3px] pl-[10px] text-[20px] font-light text-white">
          Energize Madison
        </div>
        <nav className="flex items-center">
          <div className="flex gap-[18px]">
            {navItems.map((item) => (
              <span key={item} className="text-[18px] font-black tracking-[1.8px] text-white">
                {item}
              </span>
            ))}
          </div>
          <FaSearch className="ml-[12px] text-[19px] text-white" />
          <FaGlobe className="ml-[6px] text-[18px] text-white" />
        </nav>
      </header>

      <main className="pl-[384px]">
        <h1 className="mt-[45px] text-[62px] leading-[76px] font-black tracking-[0.25px] text-[#07262e]">Capitol East District</h1>
        <p className="mt-[26px] text-[24px] leading-[31.3px] font-extralight tracking-[2.73px] text-[#2f4650]">
          The redevelopment and revival of the East Washington Avenue corridor has been
          <br />
          gaining momentum over the past 15 years. Dormant industrial buildings from Blair
          <br />
          Street down East Washington to the Yahara River have been razed, renovated or
          <br />
          planned for redevelopment. Since 2005, the tax base in the area has grown 350% to
          <br />
          $437.8 million. There is an estimated additional 850,000 square feet of commercial
          <br />
          space available, and 1,700 new jobs have been created.
        </p>
        <div className="mt-[37px] flex gap-[9px]">
          {buttons.map(({ label, width }) => (
            <button
              key={label}
              className={`flex h-[55px] items-center justify-center rounded-[2px] bg-[#2bd2ca] ${width}`}
            >
              <span className="scale-x-[0.62] font-['Liberation_Sans',sans-serif] text-[25px] font-bold tracking-[3.4px] whitespace-nowrap text-white">
                {label}
              </span>
            </button>
          ))}
        </div>
      </main>

      <section className="relative mt-[89px] h-[546px] overflow-hidden">
        <MapCanvas />
        <div className="absolute top-[10px] left-[10px] flex h-[40px] rounded-[2px] bg-white font-['Roboto',sans-serif] text-[18px] tracking-[1.5px] shadow-[0_1px_4px_rgba(0,0,0,0.3)]">
          <div className="flex w-[75px] items-center justify-center font-medium text-black">Map</div>
          <div className="flex w-[115px] items-center justify-center border-l border-[#e6e6e6] text-[#565656]">
            Satellite
          </div>
        </div>
        <div className="absolute top-[10px] right-[10px] flex h-[40px] w-[40px] items-center justify-center rounded-[2px] bg-white shadow-[0_1px_4px_rgba(0,0,0,0.3)]">
          <svg width="18" height="18" viewBox="0 0 18 18" fill="none" stroke="#666666" strokeWidth="2">
            <path d="M1 6V1H6M12 1H17V6M17 12V17H12M6 17H1V12" />
          </svg>
        </div>
        <div className="absolute top-[523px] right-[10px] flex h-[40px] w-[40px] justify-center rounded-[2px] bg-white pt-[6px]">
          <svg width="16" height="26" viewBox="0 0 16 26">
            <circle cx="8" cy="5" r="4.500" fill="#f2ab1c" />
            <path d="M2 20V13C2 10.500 4 9.500 8 9.500S14 10.500 14 13V20L8 24Z" fill="#f2ab1c" />
          </svg>
        </div>
      </section>

      <div className="mt-[114px] h-[107px] bg-[#e0803c]" />

      <footer className="flex flex-1 gap-[94px] bg-[#07262e] pl-[354px]">
        <div className="w-[214px] pt-[45px]">
          <h3 className="text-[17px] leading-[24px] font-black tracking-[1.1px] whitespace-nowrap text-white">Energize Madison</h3>
          <ul className="mt-[10px]">
            {footerLinks.map((link) => (
              <li key={link} className="text-[12.5px] leading-[26px] tracking-[1.15px] whitespace-nowrap text-[#1ed2c8]">
                {link}
              </li>
            ))}
          </ul>
        </div>
        <ul className="pt-[61px]">
          {partnerLinks.map((link) => (
            <li key={link} className="text-[12.5px] leading-[26px] tracking-[1.15px] text-[#1ed2c8]">
              {link}
            </li>
          ))}
        </ul>
      </footer>
    </div>
  )
}
